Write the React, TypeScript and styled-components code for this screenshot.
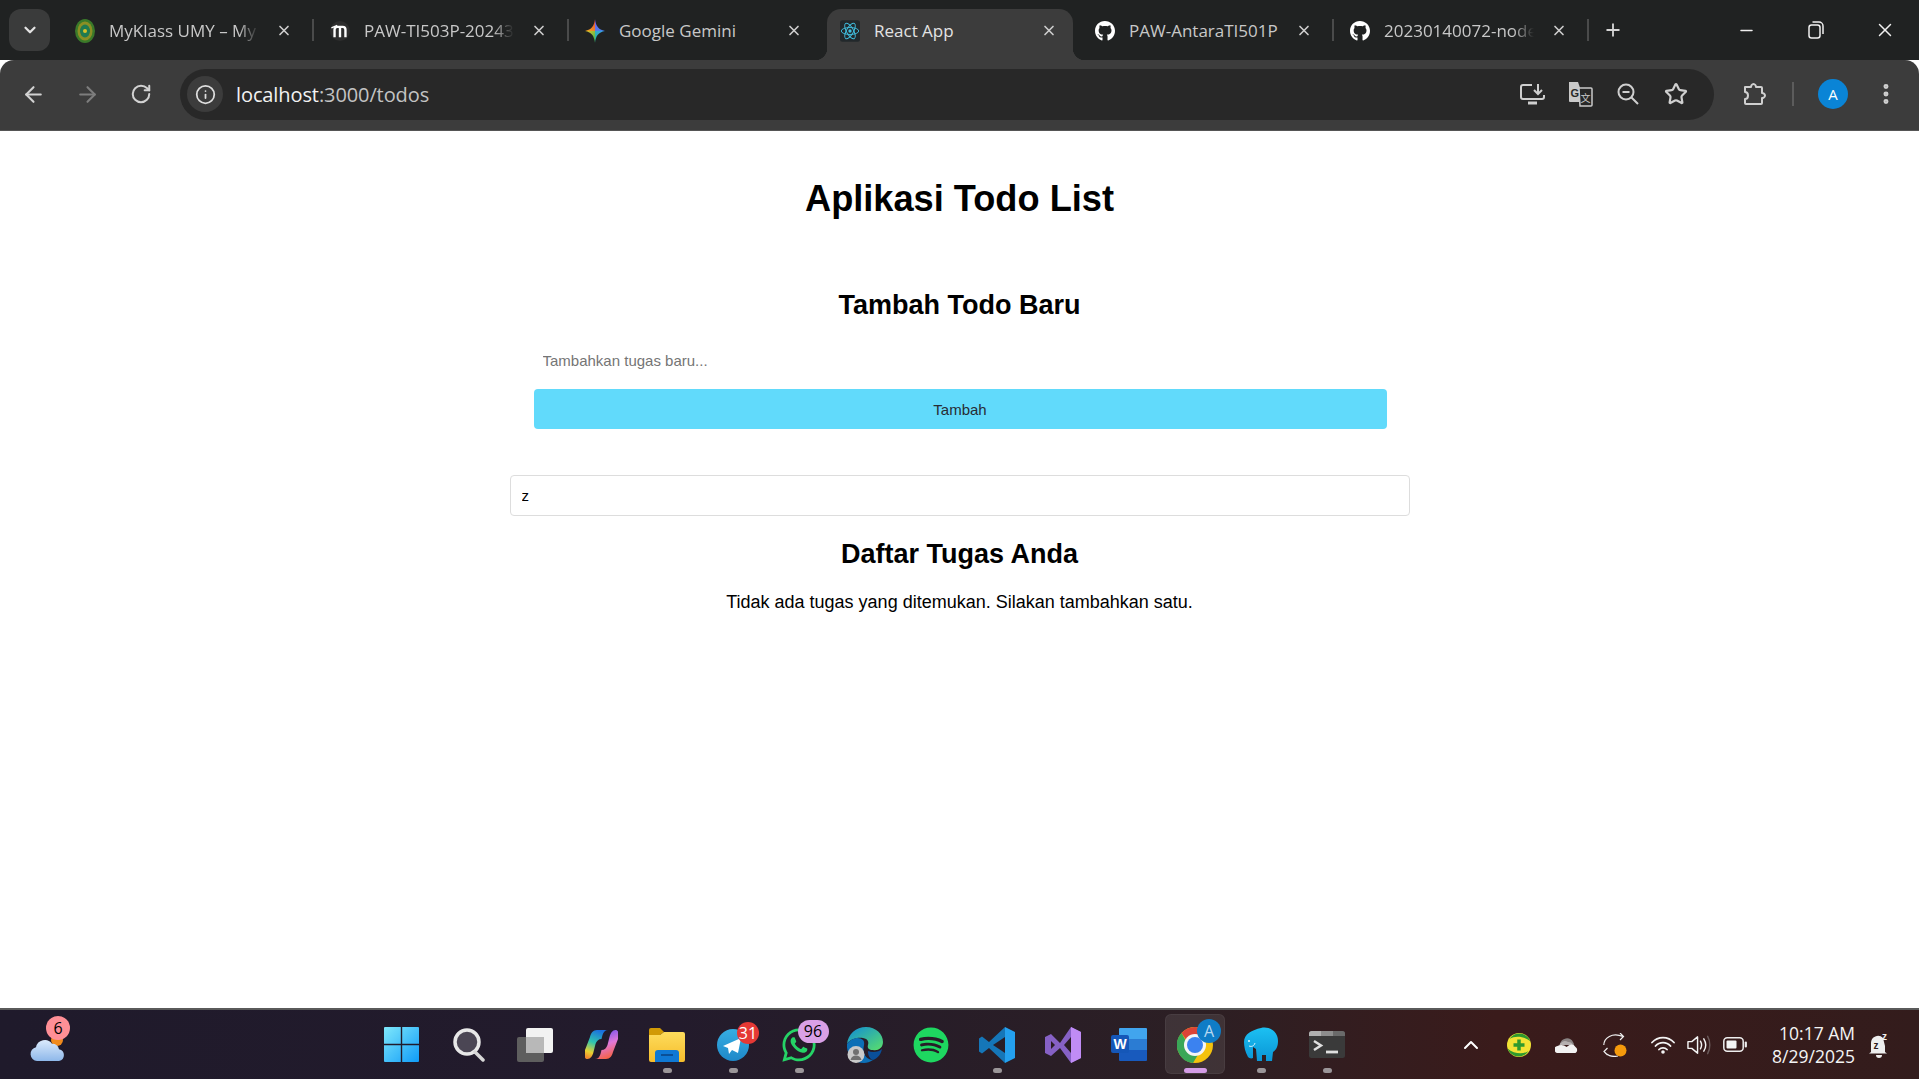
import styled, { createGlobalStyle } from 'styled-components'
import { ReactNode } from 'react'
import { FaGithub, FaSpotify, FaWhatsapp } from 'react-icons/fa'
import { ArrowLeft, ArrowRight, ChevronDown, ChevronUp, Info, Minus, MoreVertical, Plus, RotateCw, Star, X } from 'lucide-react'

const GlobalStyle = createGlobalStyle`
  html, body {
    margin: 0;
    height: 100%;
    overflow: hidden;
    background: #fff;
    font-family: 'Liberation Sans', Arial, sans-serif;
  }
  * { box-sizing: border-box; }
`

const Screen = styled.div`
  height: 1079px;
  display: flex;
  flex-direction: column;
`

/* browser chrome */

const TabStrip = styled.div`
  height: 60px;
  flex: none;
  display: flex;
  align-items: flex-start;
  padding-top: 9px;
  padding-left: 9px;
  background: #202222;
  font-family: 'Open Sans', 'Noto Sans', sans-serif;
`

const TabMenu = styled.div`
  width: 41px;
  height: 42px;
  margin-right: 9px;
  flex: none;
  display: flex;
  align-items: center;
  justify-content: center;
  border-radius: 12px;
  background: #3a3b3b;
  color: #e3e3e3;
`

const TabSlot = styled.div<{ $sep?: boolean }>`
  position: relative;
  width: 255px;
  height: 51px;
  flex: none;
  padding: 0 6px 0 3px;
  &::after {
    content: '';
    display: ${(p) => (p.$sep ? 'block' : 'none')};
    position: absolute;
    right: 0;
    top: 10px;
    width: 2px;
    height: 22px;
    background: #4a4b4b;
  }
`

const Tab = styled.div<{ $active?: boolean }>`
  position: relative;
  height: 100%;
  display: flex;
  align-items: center;
  padding: 0 16px 8px 13px;
  border-radius: 14px 14px 0 0;
  background: ${(p) => (p.$active ? '#3c3c3c' : 'transparent')};
  color: ${(p) => (p.$active ? '#e3e3e3' : '#c8c8c8')};
  ${(p) =>
    p.$active &&
    `
    &::before, &::after {
      content: '';
      position: absolute;
      bottom: 0;
      width: 12px;
      height: 12px;
    }
    &::before { left: -12px; background: radial-gradient(circle at 0 0, transparent 12px, #3c3c3c 12.5px); }
    &::after { right: -12px; background: radial-gradient(circle at 100% 0, transparent 12px, #3c3c3c 12.5px); }
  `}
`

const TabIcon = styled.span`
  width: 20px;
  height: 20px;
  flex: none;
  display: flex;
  align-items: center;
  justify-content: center;
  margin-right: 14px;
`

const TabTitle = styled.span<{ $fade?: boolean }>`
  flex: 1;
  min-width: 0;
  margin-right: 17px;
  font-size: 17px;
  white-space: nowrap;
  overflow: hidden;
  ${(p) => p.$fade && 'mask-image: linear-gradient(to right, #000 86%, transparent 100%);'}
`

const TabClose = styled.span`
  width: 16px;
  height: 16px;
  flex: none;
  display: flex;
  align-items: center;
  justify-content: center;
  color: #d0d0d0;
`

const NewTab = styled.div`
  width: 26px;
  height: 42px;
  margin-left: 11px;
  display: flex;
  align-items: center;
  justify-content: center;
  color: #d6d6d6;
`

const WindowControls = styled.div`
  margin-left: auto;
  margin-top: -9px;
  display: flex;
  color: #f0f0f0;
`

const WindowButton = styled.div`
  width: 69px;
  height: 60px;
  display: flex;
  align-items: center;
  justify-content: center;
`

const Toolbar = styled.div`
  height: 71px;
  flex: none;
  display: flex;
  align-items: center;
  padding: 0 0 2px 11px;
  background: #3c3c3c;
  border-bottom: 1px solid #555;
  border-radius: 14px 14px 0 0;
  font-family: 'Open Sans', 'Noto Sans', sans-serif;
`

const NavButton = styled.div<{ $dim?: boolean }>`
  width: 44px;
  height: 44px;
  margin-right: 10px;
  flex: none;
  display: flex;
  align-items: center;
  justify-content: center;
  color: ${(p) => (p.$dim ? '#7d7d7d' : '#d2d2d2')};
`

const Omnibox = styled.div`
  width: 1534px;
  height: 51px;
  margin-left: 7px;
  flex: none;
  display: flex;
  align-items: center;
  padding: 0 14px 0 7px;
  border-radius: 26px;
  background: #282828;
`

const SiteInfo = styled.div`
  width: 36px;
  height: 36px;
  margin-right: 13px;
  display: flex;
  align-items: center;
  justify-content: center;
  border-radius: 50%;
  background: #3c3c3c;
  color: #dedede;
`

const Url = styled.div`
  flex: 1;
  font-size: 20px;
  letter-spacing: -0.1px;
  color: #c3c3c3;
  span {
    color: #f2f2f2;
  }
`

const OmniAction = styled.div`
  width: 48px;
  height: 36px;
  display: flex;
  align-items: center;
  justify-content: center;
  color: #cfcfcf;
`

const ToolbarTail = styled.div`
  flex: 1;
  display: flex;
  align-items: center;
  padding-left: 18px;
  color: #cfcfcf;
`

const ExtensionButton = styled.div`
  width: 44px;
  display: flex;
  justify-content: center;
`

const ToolbarDivider = styled.div`
  width: 2px;
  height: 24px;
  margin: 0 24px 0 16px;
  background: #5c5c5c;
`

const Avatar = styled.div`
  width: 30px;
  height: 30px;
  border-radius: 50%;
  display: flex;
  align-items: center;
  justify-content: center;
  background: #0a84d6;
  color: #fff;
  font-size: 15px;
`

const MenuButton = styled.div`
  margin-left: 25px;
  display: flex;
`

/* page */

const Page = styled.main`
  flex: 1;
  min-height: 0;
  background: #fff;
  color: #000;
`

const Container = styled.div`
  width: 900px;
  margin: 0 auto;
  padding-top: 47px;
  text-align: center;
`

const Title = styled.h1`
  margin: 0 0 71px;
  font-size: 36.2px;
  line-height: 41px;
  font-weight: 700;
`

const FormHeading = styled.h2`
  margin: 0 0 22px;
  font-size: 27px;
  line-height: 31px;
  font-weight: 700;
`

const TodoForm = styled.form`
  margin: 0 23px 46px 24px;
  display: flex;
  flex-direction: column;
  gap: 10px;
`

const TodoInput = styled.input`
  height: 36px;
  padding: 0 9px 2px;
  border: none;
  outline: none;
  background: transparent;
  font: 15px 'Liberation Sans', Arial, sans-serif;
  &::placeholder {
    color: #757575;
  }
`

const AddButton = styled.button`
  height: 40px;
  border: none;
  border-radius: 4px;
  background: #61dafb;
  color: #282c34;
  font: 15px 'Liberation Sans', Arial, sans-serif;
`

const SearchInput = styled.input`
  display: block;
  width: 100%;
  height: 41px;
  padding: 0 11px;
  border: 1px solid #ddd;
  border-radius: 4px;
  outline: none;
  background: #fff;
  color: #000;
  font: 15px 'Liberation Sans', Arial, sans-serif;
`

const ListHeading = styled.h2`
  margin: 23px 0 22px;
  font-size: 27px;
  line-height: 31px;
  font-weight: 700;
`

const EmptyText = styled.p`
  margin: 0;
  font-size: 18px;
  line-height: 21px;
`

/* taskbar */

const Taskbar = styled.footer`
  height: 71px;
  flex: none;
  display: grid;
  grid-template-columns: 370px 990px 1fr;
  align-items: center;
  border-top: 2px solid #5a5a5a;
  background: linear-gradient(90deg, #1f1a2b 0%, #231b2c 35%, #2c1f24 62%, #3a1b1b 78%, #331c1c 100%);
  font-family: 'Open Sans', 'Noto Sans', sans-serif;
`

const WeatherSlot = styled.div`
  position: relative;
  width: 36px;
  height: 36px;
  margin-left: 30px;
`

const AppRow = styled.div`
  display: flex;
`

const AppSlot = styled.div<{ $active?: boolean }>`
  position: relative;
  width: 66px;
  height: 66px;
  display: flex;
  align-items: center;
  justify-content: center;
  ${(p) => p.$active && `
    &::before {
      content: '';
      position: absolute;
      inset: 2.5px 3px 3.5px;
      border-radius: 6px;
      background: rgba(255, 255, 255, 0.09);
      box-shadow: inset 0 0 0 1px rgba(255, 255, 255, 0.05);
    }
  `}
  svg { position: relative; }
`

const RunDot = styled.span<{ $active?: boolean }>`
  position: absolute;
  bottom: 4.5px;
  left: 50%;
  width: ${(p) => (p.$active ? 23 : 9)}px;
  height: 5px;
  margin-left: ${(p) => (p.$active ? -11.5 : -4.5)}px;
  border-radius: 3px;
  background: ${(p) => (p.$active ? '#d49ce6' : '#9b9699')};
`

const Badge = styled.span<{ $bg: string; $color?: string; $w: number; $h: number; $top: number; $right: number }>`
  position: absolute;
  top: ${(p) => p.$top}px;
  right: ${(p) => p.$right}px;
  width: ${(p) => p.$w}px;
  height: ${(p) => p.$h}px;
  display: flex;
  align-items: center;
  justify-content: center;
  border-radius: ${(p) => p.$h / 2}px;
  background: ${(p) => p.$bg};
  color: ${(p) => p.$color ?? '#000'};
  font-size: 16px;
  line-height: 1;
`

const Tray = styled.div`
  display: flex;
  align-items: center;
  padding-left: 87px;
  color: #fff;
`

const TrayIcon = styled.div<{ $w?: number }>`
  width: ${(p) => p.$w ?? 48}px;
  flex: none;
  display: flex;
  justify-content: center;
`

const Clock = styled.div`
  width: 96px;
  flex: none;
  text-align: right;
  white-space: nowrap;
  color: #f4f4f4;
  font-size: 17.5px;
  line-height: 23px;
`

const BellSlot = styled.div`
  margin-left: 13px;
  display: flex;
`

/* drawings */

function MyKlassIcon() {
  return (
    <svg width="20" height="24" viewBox="0 0 20 24">
      <ellipse cx="10" cy="12" rx="10" ry="12" fill="#3a7a2a" />
      <ellipse cx="10" cy="12" rx="7.500" ry="9.500" fill="#8a8f24" />
      <ellipse cx="10" cy="12" rx="5" ry="6.500" fill="#1f7a50" />
      <circle cx="10" cy="12" r="2" fill="#d8c22a" />
    </svg>
  )
}

function MoodleIcon() {
  return (
    <svg width="22" height="22" viewBox="0 0 22 22" fill="none">
      <circle cx="11" cy="11" r="11" fill="#2e2e2e" />
      <path d="M5 18V9.500c0-2 1.200-3 3-3h6c2 0 3 1.200 3 3V18M11 7v11" stroke="#fff" strokeWidth="2.600" />
      <path d="M1.500 7.500 8 5" stroke="#fff" strokeWidth="1.600" />
    </svg>
  )
}

function GeminiIcon() {
  return (
    <svg width="22" height="26" viewBox="0 0 24 28">
      <defs>
        <linearGradient id="gemTL" x1="0" y1="1" x2="1" y2="0">
          <stop offset="0" stopColor="#f5b21a" />
          <stop offset="1" stopColor="#e8483a" />
        </linearGradient>
        <linearGradient id="gemTR" x1="0" y1="0" x2="1" y2="1">
          <stop offset="0" stopColor="#7b5ce8" />
          <stop offset="1" stopColor="#3b8df0" />
        </linearGradient>
        <linearGradient id="gemBL" x1="0" y1="0" x2="1" y2="1">
          <stop offset="0" stopColor="#f2c31f" />
          <stop offset="1" stopColor="#2fb35a" />
        </linearGradient>
        <linearGradient id="gemBR" x1="1" y1="0" x2="0" y2="1">
          <stop offset="0" stopColor="#3b9df0" />
          <stop offset="1" stopColor="#27b89a" />
        </linearGradient>
      </defs>
      <path d="M12 0C11 8 8 12.500 0 14h12z" fill="url(#gemTL)" />
      <path d="M12 0c1 8 4 12.500 12 14H12z" fill="url(#gemTR)" />
      <path d="M12 28c-1-8-4-12.500-12-14h12z" fill="url(#gemBL)" />
      <path d="M12 28c1-8 4-12.500 12-14H12z" fill="url(#gemBR)" />
    </svg>
  )
}

function ReactIcon() {
  return (
    <svg width="24" height="26" viewBox="0 0 24 26" fill="none" stroke="#41bfe0" strokeWidth="1.100">
      <rect x="0" y="0" width="24" height="26" rx="3" fill="#22282b" stroke="none" />
      <ellipse cx="12" cy="13" rx="10.500" ry="4.200" />
      <ellipse cx="12" cy="13" rx="10.500" ry="4.200" transform="rotate(60 12 13)" />
      <ellipse cx="12" cy="13" rx="10.500" ry="4.200" transform="rotate(120 12 13)" />
      <circle cx="12" cy="13" r="2" fill="#41bfe0" stroke="none" />
    </svg>
  )
}

function InstallIcon() {
  return (
    <svg width="25" height="22" viewBox="0 0 25 22" fill="none" stroke="currentColor" strokeWidth="2">
      <path d="M12 2H3a2 2 0 0 0-2 2v10a2 2 0 0 0 2 2h19a2 2 0 0 0 2-2v-2" />
      <path d="M8 20h9" strokeWidth="3" />
      <path d="M18 1v9M14 7l4 4 4-4" />
    </svg>
  )
}

function TranslateIcon() {
  return (
    <svg width="26" height="26" viewBox="0 0 26 26">
      <path d="M2 1h9l7 20H3a1 1 0 0 1-1-1z" fill="#c9c9c9" />
      <path d="M12 7h12a1 1 0 0 1 1 1v16a1 1 0 0 1-1 1H13z" fill="#282828" stroke="#c9c9c9" strokeWidth="1.500" />
      <text x="3.500" y="16" fontSize="11" fontWeight="700" fontFamily="'Liberation Sans', sans-serif" fill="#282828">G</text>
      <text x="13.500" y="20.500" fontSize="10" fontFamily="'Noto Sans CJK SC', sans-serif" fill="#c9c9c9">文</text>
    </svg>
  )
}

function ZoomOutIcon() {
  return (
    <svg width="22" height="22" viewBox="0 0 22 22" fill="none" stroke="currentColor" strokeWidth="2">
      <circle cx="9" cy="9" r="7.500" />
      <path d="M5.500 9h7M14.500 14.500 21 21" />
    </svg>
  )
}

function ExtensionIcon() {
  return (
    <svg width="24" height="24" viewBox="0 0 24 24" fill="none" stroke="currentColor" strokeWidth="2" strokeLinejoin="round">
      <path d="M3 5h6c0-1 1-3 2.500-3S14 4 14 5h5a1 1 0 0 1 1 1v5c1 0 3 1 3 2.500S21 16 20 16v5a1 1 0 0 1-1 1H4a1 1 0 0 1-1-1v-4c2 0 3-1.500 3-3.500S5 10 3 10z" />
    </svg>
  )
}

function RestoreIcon() {
  return (
    <svg width="16" height="18" viewBox="0 0 16 18" fill="none" stroke="currentColor" strokeWidth="1.500">
      <rect x="1" y="4" width="11" height="13" rx="2.500" />
      <path d="M4.500 1H11a4 4 0 0 1 4 4v8" />
    </svg>
  )
}

function WeatherIcon() {
  return (
    <svg width="36" height="36" viewBox="0 0 36 36">
      <defs>
        <linearGradient id="cloud" x1="0" y1="0" x2="0" y2="1">
          <stop offset="0" stopColor="#dbeafc" />
          <stop offset="1" stopColor="#8eb8ea" />
        </linearGradient>
      </defs>
      <circle cx="27" cy="13" r="6" fill="#f08a1d" />
      <path d="M7 34a7 7 0 0 1-1-13.800 9 9 0 0 1 16-3.500 7 7 0 0 1 7 5.500 6 6 0 0 1 0 11.800z" fill="url(#cloud)" />
    </svg>
  )
}

function StartIcon() {
  return (
    <svg width="38" height="35" viewBox="0 0 38 35">
      <defs>
        <linearGradient id="win" x1="0" y1="0" x2="1" y2="1">
          <stop offset="0" stopColor="#7fe8fb" />
          <stop offset="1" stopColor="#0f9bf8" />
        </linearGradient>
      </defs>
      <path d="M0 1a1 1 0 0 1 1-1h15.800v16.800H0zM18.200 0H34a1 1 0 0 1 1 1v15.800H18.200zM0 18.200h16.800V35H1a1 1 0 0 1-1-1zM18.200 18.200H35V34a1 1 0 0 1-1 1H18.200z" fill="url(#win)" />
    </svg>
  )
}

function SearchIcon() {
  return (
    <svg width="32" height="34" viewBox="0 0 32 34" fill="none">
      <circle cx="14" cy="14" r="12" fill="#4b4654" stroke="#e8e8e8" strokeWidth="3.500" />
      <path d="M22 24l8 8" stroke="#d8d8d8" strokeWidth="3.500" strokeLinecap="round" />
    </svg>
  )
}

function TaskViewIcon() {
  return (
    <svg width="36" height="34" viewBox="0 0 36 34">
      <rect x="0" y="9" width="27" height="25" rx="2" fill="#5e5e5e" />
      <rect x="9" y="0" width="27" height="25" rx="2" fill="#f2f2f2" />
      <rect x="9" y="9" width="18" height="16" fill="#b8b8b8" />
    </svg>
  )
}

function CopilotIcon() {
  const lobe = 'M12 1h11c-3 0-4.500 2-5.500 5l-1 4c-3 0-5 2-6 5l-2 8c-1 4-3 7-6 7-3.500 0-3.500-5-2.500-9L5 8c1-4 3-7 7-7z'
  return (
    <svg width="33" height="31" viewBox="0 0 33 31">
      <defs>
        <linearGradient id="cpa" x1="0.600" y1="0" x2="0.300" y2="1">
          <stop offset="0" stopColor="#1a6fe0" />
          <stop offset="0.450" stopColor="#2fc4b0" />
          <stop offset="0.800" stopColor="#e8d030" />
          <stop offset="1" stopColor="#f08a30" />
        </linearGradient>
        <linearGradient id="cpb" x1="0.400" y1="0" x2="0.700" y2="1">
          <stop offset="0" stopColor="#f8603a" />
          <stop offset="0.500" stopColor="#e078d8" />
          <stop offset="1" stopColor="#6a4ff0" />
        </linearGradient>
      </defs>
      <path d={lobe} fill="url(#cpa)" />
      <path d={lobe} fill="url(#cpb)" transform="rotate(180 16.500 15.500)" />
    </svg>
  )
}

function ExplorerIcon() {
  return (
    <svg width="36" height="34" viewBox="0 0 36 34">
      <defs>
        <linearGradient id="fold" x1="0" y1="0" x2="0" y2="1">
          <stop offset="0" stopColor="#fddc5c" />
          <stop offset="1" stopColor="#f6bd2c" />
        </linearGradient>
      </defs>
      <path d="M0 2a2 2 0 0 1 2-2h9l4 4-4 3H0z" fill="#d19a06" />
      <path d="M0 7h11l4-3h19a2 2 0 0 1 2 2v26a2 2 0 0 1-2 2H2a2 2 0 0 1-2-2z" fill="url(#fold)" />
      <path d="M6 25a3 3 0 0 1 3-3h18a3 3 0 0 1 3 3v9H6z" fill="#0f78d4" />
      <rect x="12" y="26" width="12" height="2" fill="#0a4f96" />
    </svg>
  )
}

function TelegramIcon() {
  return (
    <svg width="32" height="32" viewBox="0 0 32 32">
      <defs>
        <linearGradient id="tg" x1="0" y1="0" x2="0" y2="1">
          <stop offset="0" stopColor="#37aee2" />
          <stop offset="1" stopColor="#1e88c9" />
        </linearGradient>
      </defs>
      <circle cx="16" cy="16" r="16" fill="url(#tg)" />
      <path d="M6 17 24 9l-3 15-6-3-3 4-1-6z" fill="#fff" />
    </svg>
  )
}

function EdgeIcon() {
  return (
    <svg width="36" height="36" viewBox="0 0 36 36">
      <defs>
        <linearGradient id="edgea" x1="0" y1="0" x2="1" y2="1">
          <stop offset="0" stopColor="#0f8ad8" />
          <stop offset="1" stopColor="#5ae06a" />
        </linearGradient>
      </defs>
      <path d="M0 17C1 7 9 0 19 0c10 0 17 7 17 15 0 6-5 9-10 8-4 0-6-2-5-5 1-3 0-6-5-7-6-1-13 1-16 6z" fill="url(#edgea)" />
      <path d="M0 17c4-6 12-8 16-4 3 3-1 9 1 13 1 4 5 7 9 7-3 2-6 3-9 3C7 36-1 27 0 17z" fill="#0c6fb6" />
      <path d="M26 33c5-2 8-6 9-11-3 3-9 4-14 2 0 5 2 8 5 9z" fill="#0a4f9a" />
      <circle cx="9" cy="27.500" r="8.500" fill="#c9c9c9" />
      <circle cx="9" cy="25" r="3" fill="#707070" />
      <path d="M3.500 33c1-3.500 3-4.500 5.500-4.500s4.500 1 5.500 4.500z" fill="#707070" />
    </svg>
  )
}

function VsCodeIcon() {
  return (
    <svg width="36" height="36" viewBox="0 0 36 36">
      <path d="M26 0 10 15 3 9.500 0 11.500v13L3 26.500 10 21l16 15V26L14 18l12-8z" fill="#1576b8" />
      <path d="M26 0l10 5v26l-10 5z" fill="#24a0ee" />
    </svg>
  )
}

function VisualStudioIcon() {
  return (
    <svg width="36" height="36" viewBox="0 0 36 36">
      <path d="M0 10l6-3 9 9L26 0l10 5v26l-10 5-11-15-9 8-6-3z" fill="#8661c5" />
      <path d="M26 0l10 5v26l-10 5z" fill="#c08cf5" />
      <path d="M6 14v8l4-4zM26 10l-7 8 7 8z" fill="#2a1d24" />
    </svg>
  )
}

function WordIcon() {
  return (
    <svg width="36" height="33" viewBox="0 0 36 33">
      <path d="M8 1a1 1 0 0 1 1-1h26a1 1 0 0 1 1 1v10H8z" fill="#41a5ee" />
      <rect x="8" y="11" width="28" height="11" fill="#2b7cd3" />
      <path d="M8 22h28v10a1 1 0 0 1-1 1H9a1 1 0 0 1-1-1z" fill="#185abd" />
      <rect x="0" y="7" width="18" height="18" rx="2" fill="#1557b8" />
      <text x="9" y="21" textAnchor="middle" fontSize="14" fontWeight="700" fontFamily="'Liberation Sans', sans-serif" fill="#fff">W</text>
    </svg>
  )
}

function ChromeIcon() {
  return (
    <svg width="36" height="36" viewBox="0 0 36 36">
      <circle cx="18" cy="18" r="18" fill="#f4c20d" />
      <path d="M18 0a18 18 0 0 1 15.600 9H18a9 9 0 0 0-8 5L4.500 6A18 18 0 0 1 18 0z" fill="#db4437" />
      <path d="M4.500 6 13 21a9 9 0 0 0 9 5l-6 10A18 18 0 0 1 4.500 6z" fill="#3aa757" />
      <circle cx="18" cy="18" r="11" fill="#f5f5f5" />
      <circle cx="18" cy="18" r="8" fill="#3b82f0" />
    </svg>
  )
}

function PostgresIcon() {
  return (
    <svg width="34" height="35" viewBox="0 0 34 35">
      <defs>
        <linearGradient id="pg" x1="0" y1="0" x2="0" y2="1">
          <stop offset="0" stopColor="#1cc0f2" />
          <stop offset="1" stopColor="#0a96d6" />
        </linearGradient>
      </defs>
      <path d="M17 1c8-2 17 3 17 13 0 6-2 9-5 11l-1 9h-6v-6h-4v6h-5l-1-12c-1-1-2-1-3-2v11c-2 1-4 0-5-1C1 25 0 19 0 15 0 7 8 3 17 1z" fill="url(#pg)" />
      <path d="M5 19c3 1 5 0 6-3" stroke="#d5f2fb" strokeWidth="1" fill="none" />
      <circle cx="5" cy="14" r="1" fill="#e8fbff" />
    </svg>
  )
}

function TerminalIcon() {
  return (
    <svg width="36" height="27" viewBox="0 0 36 27" fill="none">
      <rect width="36" height="27" rx="2.500" fill="#3a3a3a" />
      <path d="M2.500 0H12v5H0V2.500A2.500 2.500 0 0 1 2.500 0z" fill="#b0b0b0" />
      <rect x="12" width="12" height="5" fill="#8d8d8d" />
      <path d="M24 0h9.500A2.500 2.500 0 0 1 36 2.500V5H24z" fill="#6a6a6a" />
      <path d="M5 10l7 4.500L5 19" stroke="#e0e0e0" strokeWidth="2.500" />
      <path d="M17 21h12" stroke="#e0e0e0" strokeWidth="2.800" />
    </svg>
  )
}

function SafeIcon() {
  return (
    <svg width="24" height="24" viewBox="0 0 24 24">
      <circle cx="12" cy="12" r="12" fill="#f2e335" />
      <path d="M0.500 15.500c3 8.500 15 11.500 21 2.500-5 3.500-14 3.500-21-2.500zM23.500 8.500C20.500 0 8.500-3 2.500 6c5-3.500 14-3.500 21 2.500z" fill="#2e9a2e" />
      <path d="M12 6.500v11M6.500 12h11" stroke="#2e9a2e" strokeWidth="3.500" />
    </svg>
  )
}

function OneDriveIcon() {
  return (
    <svg width="24" height="16" viewBox="0 0 24 16">
      <path d="M5 7a7 7 0 0 1 13-2 5 5 0 0 1 1 3z" fill="#8a8484" />
      <path d="M4 9a6 6 0 0 1 9-4 5 5 0 0 1 5 3H4z" fill="#b5b0b0" />
      <path d="M3.500 16a3.500 3.500 0 0 1-1-7c3-2 7-1 9 1l3-2a5 5 0 0 1 6 2 3.500 3.500 0 0 1 0 6z" fill="#f2f2f2" />
    </svg>
  )
}

function SyncIcon() {
  return (
    <svg width="24" height="24" viewBox="0 0 24 24" fill="none" stroke="#f0f0f0" strokeWidth="1.200">
      <path d="M0.800 12C1 5 9 -1 20 3.500M17 0l3.500 3.500L17 7" />
      <path d="M15 23C9 24.500 3 22 1 18.500M4.500 15 1 18.500 4.500 22" />
      <circle cx="17.500" cy="17.500" r="6" fill="#f59a0c" stroke="none" />
    </svg>
  )
}

function WifiIcon() {
  return (
    <svg width="24" height="18" viewBox="0 0 24 18" fill="none" stroke="#f4f4f4" strokeWidth="1.800" strokeLinecap="round">
      <path d="M1 6.500c6-6.500 16-6.500 22 0M4.500 10c4-4.500 11-4.500 15 0M8 13.500c2.200-2.300 5.800-2.300 8 0" />
      <circle cx="12" cy="16" r="1.800" fill="#f4f4f4" stroke="none" />
    </svg>
  )
}

function VolumeIcon() {
  return (
    <svg width="25" height="20" viewBox="0 0 25 20" fill="none" stroke="#f4f4f4" strokeWidth="1.500">
      <path d="M1 6.500h4L11 1.500v17L5 13.500H1z" strokeLinejoin="round" />
      <path d="M14 6c1.500 2.500 1.500 5.500 0 8M17.500 3.500c2.500 4 2.500 9 0 13" strokeLinecap="round" />
      <path d="M21.500 1c3 5 3 13 0 18" stroke="#6a5a5a" strokeLinecap="round" />
    </svg>
  )
}

function BatteryIcon() {
  return (
    <svg width="24" height="15" viewBox="0 0 24 15" fill="none">
      <rect x="0.800" y="0.800" width="19.400" height="13.400" rx="3.500" stroke="#eee" strokeWidth="1.500" />
      <rect x="3.500" y="3.500" width="10" height="8" rx="1" fill="#f4f4f4" />
      <path d="M22.800 5.500v4" stroke="#eee" strokeWidth="2.200" strokeLinecap="round" />
    </svg>
  )
}

function BellIcon() {
  return (
    <svg width="22" height="28" viewBox="0 0 22 28">
      <path d="M3 21V12a7 7 0 0 1 12-5l2 8v6l2 1.500H1z" fill="#eee" />
      <path d="M8 24h6a3 3 0 0 1-6 0z" fill="#eee" />
      <text x="5.500" y="18" fontSize="10" fontWeight="700" fontFamily="'Liberation Sans', sans-serif" fill="#2d1b1b">z</text>
      <text x="14" y="9" fontSize="10" fontWeight="700" fontFamily="'Liberation Sans', sans-serif" fill="#eee">z</text>
    </svg>
  )
}

const tabs: { icon: ReactNode; title: string; sep?: boolean; active?: boolean; fade?: boolean }[] = [
  { icon: <MyKlassIcon />, title: 'MyKlass UMY – My', sep: true, fade: true },
  { icon: <MoodleIcon />, title: 'PAW-TI503P-20243', sep: true, fade: true },
  { icon: <GeminiIcon />, title: 'Google Gemini' },
  { icon: <ReactIcon />, title: 'React App', active: true },
  { icon: <FaGithub size={24} color="#fff" />, title: 'PAW-AntaraTI501P', sep: true },
  { icon: <FaGithub size={24} color="#fff" />, title: '20230140072-node', sep: true, fade: true },
]

const apps: { icon: ReactNode; run?: boolean; active?: boolean; badge?: ReactNode }[] = [
  { icon: <StartIcon /> },
  { icon: <SearchIcon /> },
  { icon: <TaskViewIcon /> },
  { icon: <CopilotIcon /> },
  { icon: <ExplorerIcon />, run: true },
  {
    icon: <TelegramIcon />,
    run: true,
    badge: <Badge $bg="#e53935" $color="#fff" $w={22} $h={22} $top={10.5} $right={7}>31</Badge>,
  },
  {
    icon: <FaWhatsapp size={38} color="#25d366" />,
    run: true,
    badge: <Badge $bg="#d9a0e6" $w={31} $h={23} $top={8} $right={3.5}>96</Badge>,
  },
  { icon: <EdgeIcon /> },
  { icon: <FaSpotify size={36} color="#1ed760" /> },
  { icon: <VsCodeIcon />, run: true },
  { icon: <VisualStudioIcon /> },
  { icon: <WordIcon /> },
  {
    icon: <ChromeIcon />,
    active: true,
    badge: <Badge $bg="#0f7cc6" $color="#b5d8f2" $w={24} $h={24} $top={7.5} $right={7}>A</Badge>,
  },
  { icon: <PostgresIcon />, run: true },
  { icon: <TerminalIcon />, run: true },
]

function App() {
  return (
    <Screen>
      <GlobalStyle />
      <TabStrip>
        <TabMenu>
          <ChevronDown size={18} strokeWidth={3} />
        </TabMenu>
        {tabs.map((t) => (
          <TabSlot key={t.title} $sep={t.sep}>
            <Tab $active={t.active}>
              <TabIcon>{t.icon}</TabIcon>
              <TabTitle $fade={t.fade}>{t.title}</TabTitle>
              <TabClose>
                <X size={17} strokeWidth={2.5} />
              </TabClose>
            </Tab>
          </TabSlot>
        ))}
        <NewTab>
          <Plus size={20} strokeWidth={2.2} />
        </NewTab>
        <WindowControls>
          <WindowButton>
            <Minus size={19} strokeWidth={1.8} />
          </WindowButton>
          <WindowButton>
            <RestoreIcon />
          </WindowButton>
          <WindowButton>
            <X size={22} strokeWidth={1.6} />
          </WindowButton>
        </WindowControls>
      </TabStrip>

      <Toolbar>
        <NavButton>
          <ArrowLeft size={25} />
        </NavButton>
        <NavButton $dim>
          <ArrowRight size={25} />
        </NavButton>
        <NavButton>
          <RotateCw size={22} strokeWidth={2.2} />
        </NavButton>
        <Omnibox>
          <SiteInfo>
            <Info size={21} />
          </SiteInfo>
          <Url>
            <span>localhost</span>:3000/todos
          </Url>
          <OmniAction>
            <InstallIcon />
          </OmniAction>
          <OmniAction>
            <TranslateIcon />
          </OmniAction>
          <OmniAction>
            <ZoomOutIcon />
          </OmniAction>
          <OmniAction>
            <Star size={24} strokeWidth={2.2} />
          </OmniAction>
        </Omnibox>
        <ToolbarTail>
          <ExtensionButton>
            <ExtensionIcon />
          </ExtensionButton>
          <ToolbarDivider />
          <Avatar>A</Avatar>
          <MenuButton>
            <MoreVertical size={26} strokeWidth={2.6} />
          </MenuButton>
        </ToolbarTail>
      </Toolbar>

      <Page>
        <Container>
          <Title>Aplikasi Todo List</Title>
          <FormHeading>Tambah Todo Baru</FormHeading>
          <TodoForm>
            <TodoInput placeholder="Tambahkan tugas baru..." />
            <AddButton type="button">Tambah</AddButton>
          </TodoForm>
          <SearchInput defaultValue="z" />
          <ListHeading>Daftar Tugas Anda</ListHeading>
          <EmptyText>Tidak ada tugas yang ditemukan. Silakan tambahkan satu.</EmptyText>
        </Container>
      </Page>

      <Taskbar>
        <WeatherSlot>
          <WeatherIcon />
          <Badge $bg="#ff8f96" $w={24} $h={24} $top={-10.5} $right={-4}>6</Badge>
        </WeatherSlot>
        <AppRow>
          {apps.map((a, i) => (
            <AppSlot key={i} $active={a.active}>
              {a.icon}
              {a.badge}
              {(a.run || a.active) && <RunDot $active={a.active} />}
            </AppSlot>
          ))}
        </AppRow>
        <Tray>
          <TrayIcon>
            <ChevronUp size={24} strokeWidth={2} />
          </TrayIcon>
          <TrayIcon>
            <SafeIcon />
          </TrayIcon>
          <TrayIcon>
            <OneDriveIcon />
          </TrayIcon>
          <TrayIcon>
            <SyncIcon />
          </TrayIcon>
          <TrayIcon>
            <WifiIcon />
          </TrayIcon>
          <TrayIcon $w={24}>
            <VolumeIcon />
          </TrayIcon>
          <TrayIcon>
            <BatteryIcon />
          </TrayIcon>
          <Clock>
            <div>10:17 AM</div>
            <div>8/29/2025</div>
          </Clock>
          <BellSlot>
            <BellIcon />
          </BellSlot>
        </Tray>
      </Taskbar>
    </Screen>
  )
}

export default App
